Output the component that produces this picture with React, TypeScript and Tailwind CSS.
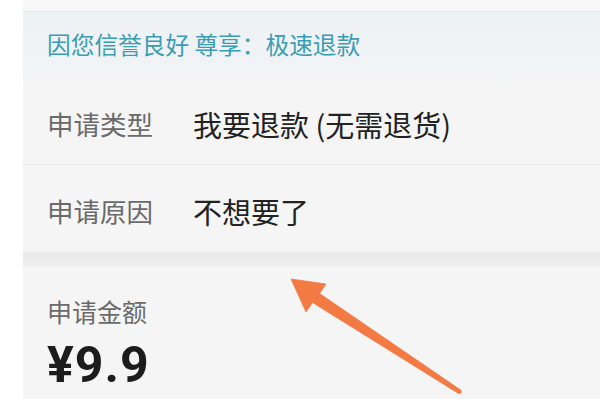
import React from "react";

const cjk = { fontFamily: '"Noto Sans CJK SC", "Noto Sans", sans-serif' };

export default function App() {
  return (
    <div className="relative flex w-[600px] h-[399px] overflow-hidden bg-white" style={cjk}>
      <div className="w-[23px] shrink-0 bg-white" />
      <div className="flex flex-1 flex-col bg-[#f5f5f5]">
        <div className="h-[12px] bg-[#f8f8f8] border-b border-[#e2e4e6]" />
        <div className="h-[72px] bg-gradient-to-b from-[#edf2f5] to-[#f2f4f5] pl-[24px] pt-[17px]">
          <div className="text-[23.7px] leading-[30px] text-[#3b9db4]">因您信誉良好 尊享：极速退款</div>
        </div>
        <div className="flex items-center h-[81px] pl-[24px] border-b border-[#e9e9e9]">
          <div className="w-[146px] text-[26.5px] leading-[36px] text-[#6a6a6a]">申请类型</div>
          <div className="text-[29px] leading-[36px] text-[#222]">我要退款 (无需退货)</div>
        </div>
        <div className="flex items-center h-[87px] pl-[24px] pt-[4px]">
          <div className="w-[146px] text-[26.5px] leading-[36px] text-[#6a6a6a]">申请原因</div>
          <div className="text-[29px] leading-[36px] text-[#222]">不想要了</div>
        </div>
        <div className="h-[15px] bg-gradient-to-b from-[#e8e8e8] to-[#efefef]" />
        <div className="flex flex-col pl-[24px] pt-[27px]">
          <div className="text-[25px] leading-[34px] text-[#6a6a6a]">申请金额</div>
          <div
            className="mt-[9px] text-[50px] leading-[56px] font-bold tracking-[1px] text-[#1c1c1c]"
            style={{ fontFamily: 'Roboto, "Liberation Sans", sans-serif' }}
          >
            ¥9.9
          </div>
        </div>
      </div>
      <svg className="absolute left-0 top-0" width="600" height="399" viewBox="0 0 600 399">
        <path
          d="M291 279 L326 284 L319.5 293.5 L461 390.3 Q462.5 393 459 393.8 L312.5 302.5 L306 312 Z"
          fill="#f47a44"
          stroke="#f47a44"
          strokeWidth="0.8"
          strokeLinejoin="round"
        />
      </svg>
    </div>
  );
}
